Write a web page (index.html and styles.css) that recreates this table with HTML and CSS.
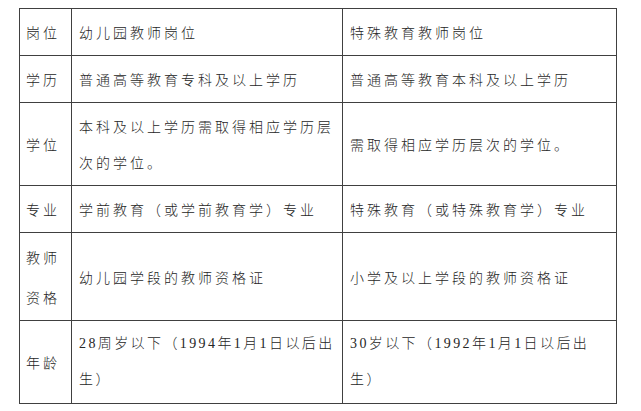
FILE: index.html
```html
<!DOCTYPE html>
<html lang="zh-CN">
<head>
<meta charset="utf-8">
<link rel="stylesheet" href="styles.css">
</head>
<body>
<table class="req">
  <colgroup>
    <col class="c1">
    <col class="c2">
    <col class="c3">
  </colgroup>
  <tr class="r47">
    <td class="label">岗位</td>
    <td>幼儿园教师岗位</td>
    <td>特殊教育教师岗位</td>
  </tr>
  <tr class="r47">
    <td class="label">学历</td>
    <td>普通高等教育专科及以上学历</td>
    <td>普通高等教育本科及以上学历</td>
  </tr>
  <tr class="r83">
    <td class="label">学位</td>
    <td>本科及以上学历需取得相应学历层次的学位。</td>
    <td>需取得相应学历层次的学位。</td>
  </tr>
  <tr class="r47">
    <td class="label">专业</td>
    <td>学前教育（或学前教育学）专业</td>
    <td>特殊教育（或特殊教育学）专业</td>
  </tr>
  <tr class="r88">
    <td class="label tall">教师资格</td>
    <td>幼儿园学段的教师资格证</td>
    <td>小学及以上学段的教师资格证</td>
  </tr>
  <tr class="r83">
    <td class="label">年龄</td>
    <td class="age">28周岁以下（1994年1月1日以后出生）</td>
    <td class="age">30岁以下（1992年1月1日以后出生）</td>
  </tr>
</table>
</body>
</html>
```
FILE: styles.css
```css
html, body {
  margin: 0;
  padding: 0;
  background: #ffffff;
}

body {
  padding: 8px 0 0 19px;
  font-family: "Noto Sans CJK SC", "Liberation Serif", serif;
  color: #262626;
}

.req {
  border-collapse: collapse;
  table-layout: fixed;
  width: 597px;
}

.c1 { width: 52px; }
.c2 { width: 271px; }
.c3 { width: 274px; }

.req td {
  border: 1px solid #404040;
  padding: 0 5px 0 7px;
  font-size: 14px;
  font-weight: 300;
  letter-spacing: 3px;
  line-height: 36px;
  vertical-align: middle;
  text-align: left;
  word-break: break-all;
}

.req td.label {
  padding: 0 0 0 6px;
}

.req td.tall {
  line-height: 40px;
}

.req td.age {
  font-family: "Liberation Serif", "Noto Sans CJK SC", serif;
  letter-spacing: 2.4px;
}

.r47 { height: 47px; }
.r83 { height: 83px; }
.r88 { height: 88px; }
```
